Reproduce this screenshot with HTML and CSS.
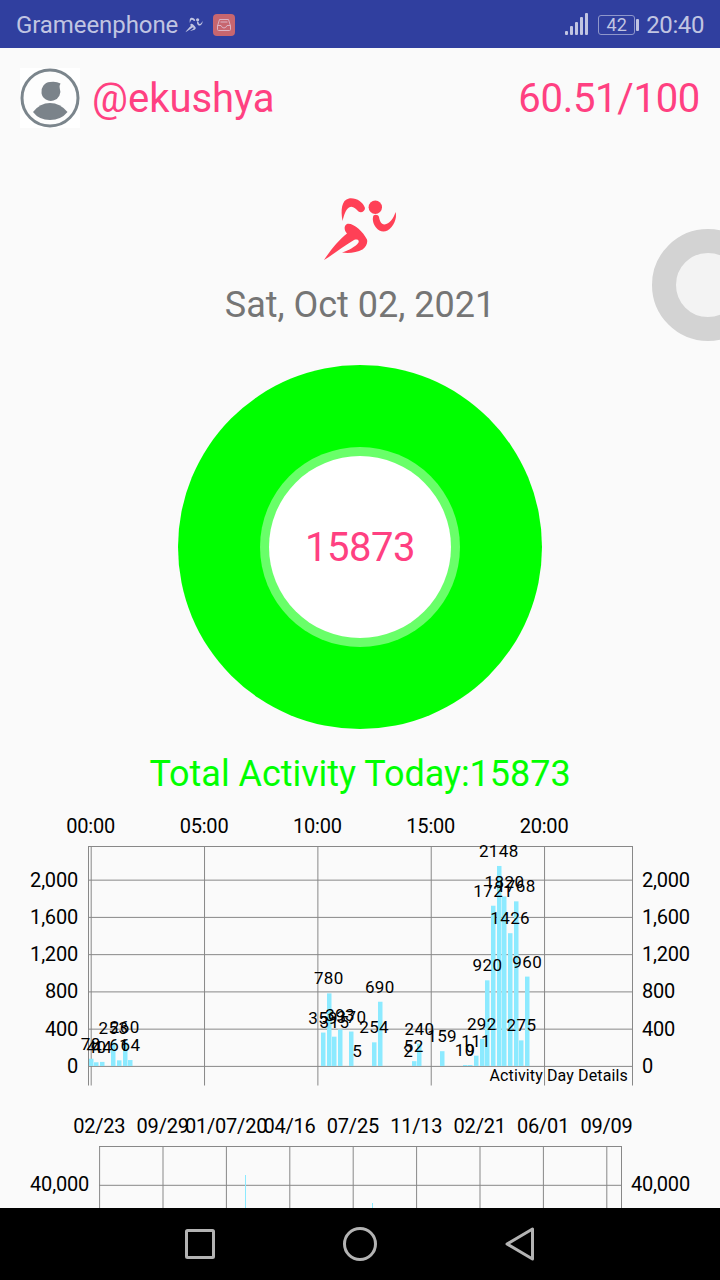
FILE: index.html
```html
<!DOCTYPE html>
<html lang="en">
<head>
    <meta charset="UTF-8">
    <meta name="viewport" content="width=device-width, initial-scale=1.0">
    <title>Activity</title>
    <link rel="stylesheet" href="styles.css">
</head>
<body>
<svg width="0" height="0" class="defs">
    <symbol id="runner" viewBox="0 0 120 100">
        <path d="M42.6 41C40.5 30 41.5 20 49 18.500C56 17.500 63 22 65 28C65 31.500 61 33.500 58.500 31.500C55.500 28.500 52.500 25.500 49 27.500C45.500 30 44 35 42.600 41Z"/>
        <circle cx="75.300" cy="27.300" r="6.700"/>
        <path d="M73.500 35.500C75 34 78.500 34.500 79 37C79.500 40 81 44.500 84.500 44.500C89.500 44 93.500 38.500 95.500 32C97.500 38 93.500 47 87.500 50.500C83.500 52.700 79 51.500 76 47.500C73 44 72 38.500 73.500 35.500Z"/>
        <path d="M24 80C30 71 38.500 60 47 53.500C44 50.500 43.500 45 47.500 43.700C54 43 63 51.500 67 59.500C68 63 66 67 62.500 69.500C57 72.500 49 73.500 42 72.500C48 70.500 55.500 67 58.500 62.500C59.500 60 57 59 54 60C44 66 33 74.500 24 80Z"/>
    </symbol>
</svg>

<div class="screen">
    <div class="status-bar">
        <span class="carrier">Grameenphone</span>
        <svg class="status-runner" viewBox="22 16 76 66"><use href="#runner" width="120" height="100"/></svg>
        <svg class="status-app" width="22" height="22" viewBox="0 0 22 22">
            <rect width="22" height="22" rx="4" fill="#c7666f"/>
            <path d="M6.500 5.500h9l2 6.500v3.500q0 1-1 1h-11q-1 0-1-1V12zM4.500 11.500h3.500q1 2.500 3 2.500t3-2.500h3.500M7.500 8h7" fill="none" stroke="#dcb3c4"/>
        </svg>
        <div class="status-right">
            <svg width="24" height="24" viewBox="0 0 24 24" fill="#c1c5e2">
                <rect x="0" y="18" width="3" height="4" rx="1"/>
                <rect x="5" y="13" width="3" height="9" rx="1"/>
                <rect x="10" y="9" width="3" height="13" rx="1"/>
                <rect x="15" y="4" width="3" height="18" rx="1"/>
                <rect x="20" y="0" width="3" height="22" rx="1"/>
            </svg>
            <div class="battery">42</div>
            <span class="clock">20:40</span>
        </div>
    </div>

    <div class="content">
        <div class="header">
            <svg class="avatar" width="60" height="60" viewBox="0 0 60 60">
                <rect width="60" height="60" fill="#fff"/>
                <circle cx="30" cy="30" r="28" fill="#fdfdfd" stroke="#7b858c" stroke-width="3"/>
                <path d="M40.500 15.500Q39.300 17.500 39.700 20A9.500 9.500 0 1 1 30 14Q36 13 40.500 15.500Z" fill="#7b838a"/>
                <path d="M13 44Q20 35 30 35T47.500 44Q41 52 30 52T13 44Z" fill="#7b838a"/>
            </svg>
            <span class="username">@ekushya</span>
            <span class="score">60.51/100</span>
        </div>

        <svg class="logo" width="120" height="100"><use href="#runner" width="120" height="100"/></svg>
        <div class="date">Sat, Oct 02, 2021</div>

        <div class="donut">
            <div class="donut-ring">
                <div class="donut-hole">15873</div>
            </div>
        </div>

        <div class="total">Total Activity Today:15873</div>

        <svg id="dayChart" class="chart" width="720" height="300" viewBox="0 800 720 300"></svg>
        <svg id="historyChart" class="chart" width="720" height="160" viewBox="0 1100 720 160"></svg>
    </div>

    <div class="nav-bar">
        <svg width="40" height="40" viewBox="0 0 40 40"><rect x="6.500" y="6.500" width="27" height="27" rx="1"/></svg>
        <svg width="40" height="40" viewBox="0 0 40 40"><circle cx="20" cy="20" r="15.500"/></svg>
        <svg width="40" height="40" viewBox="0 0 40 40"><path d="M7 20L32.500 5v30z"/></svg>
    </div>

    <div class="float-button"></div>
</div>

<script>
    function add(parent, tag, attrs, text) {
        const el = document.createElementNS('http://www.w3.org/2000/svg', tag);
        for (const key in attrs) {
            el.setAttribute(key, attrs[key]);
        }
        if (text !== undefined) {
            el.textContent = text;
        }
        parent.appendChild(el);
    }

    function line(parent, x1, y1, x2, y2) {
        add(parent, 'line', {x1, y1, x2, y2, class: 'grid'});
    }

    // [15 minute slot, steps]
    const steps = [
        [0, 78], [1, 40], [2, 44], [4, 253], [5, 61], [6, 260], [7, 64],
        [41, 359], [42, 780], [43, 315], [44, 393], [46, 370], [47, 5],
        [50, 254], [51, 690], [56, 2], [57, 52], [58, 240], [62, 159],
        [66, 10], [67, 9], [68, 111], [69, 292], [70, 920], [71, 1721],
        [72, 2148], [73, 1820], [74, 1426], [75, 1768], [76, 275], [77, 960]
    ];

    const day = document.getElementById('dayChart');
    const zeroY = 1066.4;
    const unit = 37.25 / 400;
    const slot = 5.667;

    ['00:00', '05:00', '10:00', '15:00', '20:00'].forEach((label, i) => {
        const x = 91.2 + i * slot * 20;
        line(day, x, 846, x, 1085.5);
        add(day, 'text', {x: x - 0.5, y: 833, class: 'axis middle'}, label);
    });
    [0, 400, 800, 1200, 1600, 2000].forEach(value => {
        const y = zeroY - value * unit;
        const label = value.toLocaleString('en-US');
        line(day, 88, y, 632, y);
        add(day, 'text', {x: 78, y: y + 6.5, class: 'axis end'}, label);
        add(day, 'text', {x: 642, y: y + 6.5, class: 'axis'}, label);
    });
    line(day, 88, 846.5, 633, 846.5);
    line(day, 88.5, 846, 88.5, 1085.5);
    line(day, 632.5, 846, 632.5, 1085.5);

    steps.forEach(([n, value]) => {
        if (value > 8) {
            const h = Math.max(value * unit, 1);
            add(day, 'rect', {x: Math.round(88.7 + n * slot), y: zeroY - h - 0.4, width: 4.5, height: h, class: 'bar'});
        }
    });
    steps.forEach(([n, value]) => {
        add(day, 'text', {x: 90.8 + n * slot, y: zeroY - value * unit - 9.3, class: 'value middle'}, value);
    });
    add(day, 'text', {x: 628, y: 1081, class: 'description end'}, 'Activity Day Details');

    const history = document.getElementById('historyChart');
    ['02/23', '09/29', '01/07/20', '04/16', '07/25', '11/13', '02/21', '06/01', '09/09'].forEach((label, i) => {
        const x = 99.6 + i * 63.4;
        line(history, x, 1146, x, 1260);
        add(history, 'text', {x: x - 0.3, y: 1133, class: 'axis middle'}, label);
    });
    line(history, 99, 1146.5, 622, 1146.5);
    line(history, 621.5, 1146, 621.5, 1260);
    line(history, 99, 1185.3, 622, 1185.3);
    add(history, 'text', {x: 89, y: 1191, class: 'axis end'}, '40,000');
    add(history, 'text', {x: 631, y: 1191, class: 'axis'}, '40,000');
    add(history, 'rect', {x: 245, y: 1175, width: 1, height: 80, class: 'bar'});
    add(history, 'rect', {x: 372, y: 1203, width: 1, height: 50, class: 'bar'});
</script>
</body>
</html>
```
FILE: styles.css
```css
body {
    font-family: Roboto, sans-serif;
    margin: 0;
    background-color: #fafafa;
}
.defs {
    position: absolute;
}
.screen {
    position: relative;
    display: flex;
    flex-direction: column;
    width: 720px;
    height: 1280px;
    overflow: hidden;
}
.status-bar {
    display: flex;
    align-items: center;
    box-sizing: border-box;
    height: 48px;
    padding: 2px 16px 0;
    background-color: #303f9f;
    color: #c1c5e2;
    font-size: 24px;
}
.carrier {
    letter-spacing: -0.08px;
}
.status-runner {
    width: 18px;
    height: 16px;
    margin: 0 10px 0 7px;
    fill: #c1c5e2;
}
.status-right {
    display: flex;
    align-items: center;
    margin-left: auto;
}
.battery {
    position: relative;
    box-sizing: border-box;
    width: 37px;
    height: 20px;
    margin: 0 11px 0 9px;
    border: 1.5px solid #8f97cb;
    border-radius: 3px;
    font-size: 18px;
    line-height: 18px;
    text-align: center;
}
.battery::after {
    content: "";
    position: absolute;
    right: -5px;
    top: 3px;
    width: 3px;
    height: 12px;
    border-radius: 1px;
    background: #c1c5e2;
}
.clock {
    letter-spacing: -0.4px;
}
.content {
    display: flex;
    flex-direction: column;
    align-items: center;
    height: 1160px;
    overflow: hidden;
}
.header {
    flex: none;
    display: flex;
    align-items: center;
    box-sizing: border-box;
    width: 100%;
    height: 100px;
    padding: 0 20px;
    color: #ff4081;
    font-size: 40px;
}
.username {
    margin-left: 12px;
}
.score {
    margin-left: auto;
    letter-spacing: -0.3px;
}
.logo {
    flex: none;
    margin-top: 32px;
    fill: #ff4056;
}
.date {
    flex: none;
    height: 50px;
    line-height: 50px;
    color: #757575;
    font-size: 36px;
}
.donut {
    flex: none;
    display: flex;
    align-items: center;
    justify-content: center;
    width: 364px;
    height: 364px;
    margin-top: 35px;
    border-radius: 50%;
    background: #00ff00;
}
.donut-ring {
    display: flex;
    align-items: center;
    justify-content: center;
    width: 200px;
    height: 200px;
    border-radius: 50%;
    background: #69ff69;
}
.donut-hole {
    width: 182px;
    height: 182px;
    border-radius: 50%;
    background: #fff;
    color: #ff4081;
    font-size: 40px;
    line-height: 184px;
    letter-spacing: -0.5px;
    text-align: center;
}
.total {
    flex: none;
    height: 71px;
    line-height: 90px;
    color: #00ff00;
    font-size: 36px;
    letter-spacing: -0.04px;
}
.chart {
    flex: none;
    display: block;
}
.grid {
    stroke: #888;
    stroke-width: 1;
}
.bar {
    fill: #8ceaff;
}
.axis {
    font-size: 20px;
    letter-spacing: -0.2px;
}
.value {
    font-size: 17px;
    letter-spacing: 0.4px;
}
.description {
    font-size: 16px;
    letter-spacing: 0.13px;
}
.middle {
    text-anchor: middle;
}
.end {
    text-anchor: end;
}
.nav-bar {
    flex: none;
    display: flex;
    align-items: center;
    justify-content: center;
    gap: 120px;
    height: 72px;
    background: #000;
    fill: none;
    stroke: #b3b3b3;
    stroke-width: 3;
    stroke-linejoin: round;
}
.float-button {
    position: absolute;
    left: 652px;
    top: 229px;
    box-sizing: border-box;
    width: 112px;
    height: 112px;
    border: 24px solid #d3d3d3;
    border-radius: 50%;
    background: #f3f3f3;
}
```
